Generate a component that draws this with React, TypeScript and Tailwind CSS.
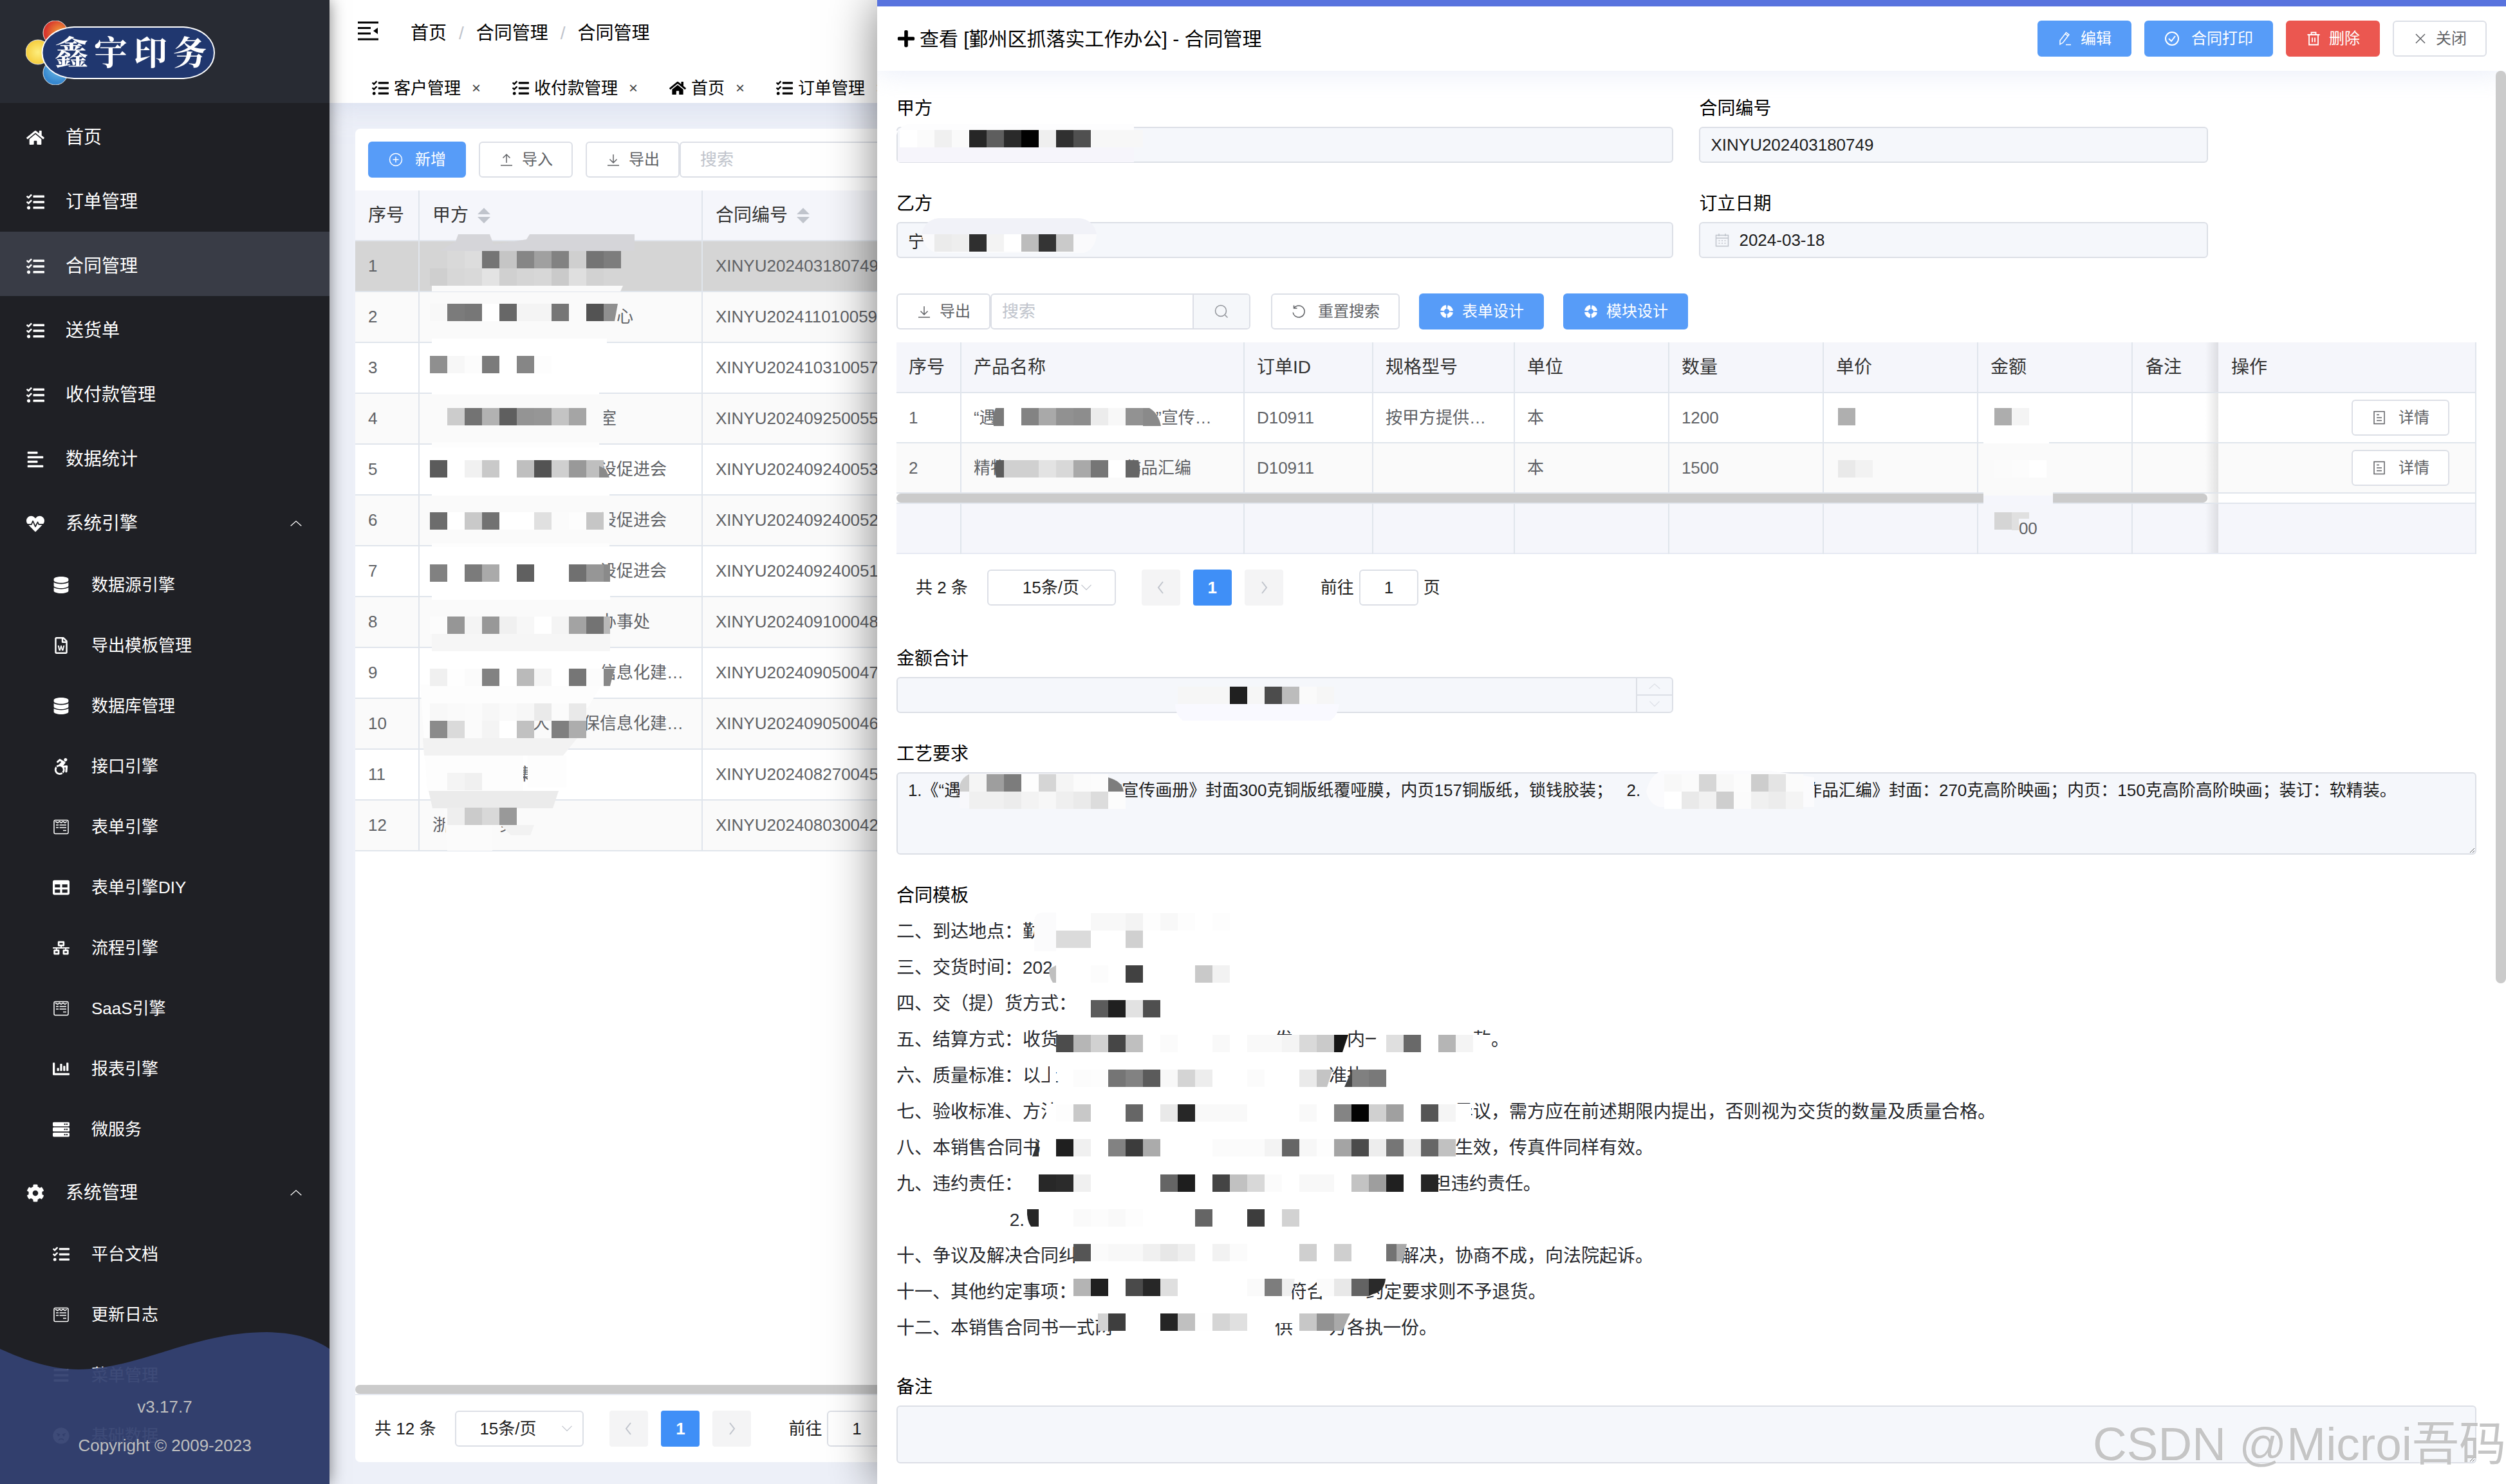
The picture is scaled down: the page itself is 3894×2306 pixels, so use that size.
import type { ReactNode } from "react";
import {
  FaAccessibleIcon,
  FaAlignLeft,
  FaAngry,
  FaBars,
  FaChartBar,
  FaCog,
  FaDatabase,
  FaHeartbeat,
  FaHome,
  FaNetworkWired,
  FaPlus,
  FaRegFileWord,
  FaServer,
  FaTable,
  FaTasks,
} from "react-icons/fa";

/* ---------- line icons ---------- */

interface LineIconProps {
  children: ReactNode;
  className?: string;
}

const LineIcon = ({ children, className = "h-6 w-6" }: LineIconProps) => (
  <svg
    viewBox="0 0 24 24"
    className={`shrink-0 ${className}`}
    fill="none"
    stroke="currentColor"
    strokeWidth="1.5"
    aria-hidden="true"
  >
    {children}
  </svg>
);

const CirclePlusIcon = () => (
  <LineIcon>
    <circle cx="12" cy="12" r="9.5" />
    <path d="M12 7.5v9M7.5 12h9" />
  </LineIcon>
);
const UploadIcon = () => (
  <LineIcon>
    <path d="M3 21h18M12 17V4M6.500 9.500 12 4l5.500 5.500" />
  </LineIcon>
);
const DownloadIcon = () => (
  <LineIcon>
    <path d="M3 21h18M12 4v13M6.500 11.500 12 17l5.500-5.500" />
  </LineIcon>
);
const EditIcon = () => (
  <LineIcon>
    <path d="M4 15 13.500 2.500l4.500 3.300L8.500 18.300 4 21z M12 4.600l4.500 3.300M13 21.500h8" />
  </LineIcon>
);
const CircleCheckIcon = () => (
  <LineIcon>
    <circle cx="12" cy="12" r="10" strokeWidth="2" />
    <path d="m7 12 4 4 6-8" strokeWidth="2" />
  </LineIcon>
);
const TrashIcon = () => (
  <LineIcon>
    <path d="M2.500 6h19M5 6v15.500h14V6M8.500 6V2.500h7V6M10 10.500v7M14 10.500v7" strokeWidth="1.800" />
  </LineIcon>
);
const CloseIcon = () => (
  <LineIcon>
    <path d="m5 5 14 14M19 5 5 19" />
  </LineIcon>
);
const SearchIcon = () => (
  <LineIcon>
    <circle cx="11" cy="11" r="8.5" />
    <path d="m17 17 4.500 4.500" />
  </LineIcon>
);
const ResetIcon = () => (
  <LineIcon>
    <path d="M5 6.500a9 9 0 1 1-1.800 7M4.500 2.500v4.500H9.500" />
  </LineIcon>
);
const HelpIcon = () => (
  <LineIcon>
    <circle cx="12" cy="12" r="7" strokeWidth="6" strokeDasharray="9 2" strokeDashoffset="-1" />
  </LineIcon>
);
const DetailIcon = () => (
  <LineIcon>
    <path d="M4 2.500h16v19H4zM8 7.500h4M8 12h8M8 16.500h8" />
  </LineIcon>
);
const CalendarIcon = () => (
  <LineIcon>
    <path d="M2.500 4.500h19v17h-19zM2.500 9h19M7 2v4M17 2v4" />
    <path d="M6.500 13h11M6.500 17h11" strokeDasharray="2 2.500" />
  </LineIcon>
);
const ChevronUp = () => (
  <LineIcon className="h-5 w-5">
    <path d="m2 16 10-9 10 9" />
  </LineIcon>
);
const ChevronDown = () => (
  <LineIcon className="h-5 w-5">
    <path d="m3 7 9 9 9-9" />
  </LineIcon>
);
const ChevronLeft = () => (
  <LineIcon>
    <path d="m15 3-7 9 7 9" strokeWidth="2" />
  </LineIcon>
);
const ChevronRight = () => (
  <LineIcon>
    <path d="m9 3 7 9-7 9" strokeWidth="2" />
  </LineIcon>
);
const FormIcon = () => (
  <svg viewBox="0 0 24 24" className="h-6" fill="none" stroke="currentColor" strokeWidth="1.500">
    <rect x="1" y="1.500" width="22" height="21" rx="2" />
    <path d="M3 3.500l3.500 2 3-2 2.500 2 3-2 3 2 3-2M4 9h4M9.500 9H20M4 13h4M9.500 13H20M15 17.500h5" />
  </svg>
);
const FoldIcon = () => (
  <svg viewBox="0 0 32 30" className="h-[30px] w-8" stroke="currentColor" strokeWidth="3" aria-hidden="true">
    <path d="M0 2h32M0 10.500h20M0 19h20M0 28h32" fill="none" />
    <path d="M31 10v10l-7-5z" fill="currentColor" stroke="none" />
  </svg>
);
const SortIcon = () => (
  <svg viewBox="0 0 20 24" className="h-6 w-5 text-[#c0c4cc]" fill="currentColor" aria-hidden="true">
    <path d="M10 0l10 10H0zM10 24 0 14h20z" />
  </svg>
);

/* ---------- redaction blocks ---------- */

const BLOCK = 27;

interface Strip {
  x: number;
  y: number;
  // one grey level per block in hex, "--" leaves the block open
  cells: string;
}

const Strips = ({ strips }: { strips: Strip[] }) => (
  <>
    {strips.map((strip) =>
      strip.cells.split(" ").map((grey, i) =>
        grey === "--" ? null : (
          <rect
            key={`${strip.x}-${strip.y}-${i}`}
            x={strip.x + i * BLOCK}
            y={strip.y}
            width={BLOCK}
            height={BLOCK}
            fill={`#${grey}${grey}${grey}`}
          />
        )
      )
    )}
  </>
);

const listStrips: Strip[] = [
  { x: 695, y: 390, cells: "d9 dd 75 c5 86 a0 82 cf 74 7d" },
  { x: 668, y: 417, cells: "cf d7 d9 e3 d0 d5 d7 ca df d2" },
  { x: 668, y: 472, cells: "f8 7b 77 ff 67 f4 f4 76 fa 53" },
  { x: 668, y: 553, cells: "8f f7 fc 7b ff 86 fd" },
  { x: 695, y: 634, cells: "cc 73 b2 5f 94 96 c4 a5 fa" },
  { x: 668, y: 715, cells: "5b ff f1 c9 ff bf 53 cf 99 bf" },
  { x: 668, y: 796, cells: "6c ff c9 72 ff ff e0 fb fd c6" },
  { x: 668, y: 877, cells: "81 ff 7b aa ff 60 ff ff 70 96" },
  { x: 668, y: 958, cells: "fc 96 f4 98 f0 f7 ff f4 a3 73" },
  { x: 668, y: 1039, cells: "f0 fe fb 82 ff ba f5 ff 76 fc" },
  { x: 668, y: 1093, cells: "f8 fa fb f7 fa f7 ea fb e9" },
  { x: 668, y: 1120, cells: "8b da fb f4 ff c1 -- 7f ad" },
  { x: 695, y: 1201, cells: "f4 f0" },
  { x: 695, y: 1255, cells: "ee cb d8 99" },
];

const ListRedaction = () => (
  <svg className="pointer-events-none absolute left-0 top-0 h-[1400px] w-[1300px]" aria-hidden="true">
    <path d="M684 390l24-15 4-11h49l6 16 51-8 5-8h163v26z" fill="#d5d5d9" />
    <path d="M671 444h297l-4 9H671z" fill="#fafafa" />
    <path d="M671 526h272v8H671zM671 607h260v6H671zM671 762h276v8H671zM671 924h277v8H671z" fill="#fff" />
    <path d="M671 687h260v8H671zM671 844h276v6H671z" fill="#fdfdfd" />
    <path d="M671 985h277v27H671z" fill="#f6f6f6" />
    <path d="M653 1064h282l-22 36h-52l-202 48z" fill="#fdfdfd" />
    <path d="M657 1147h240l-22 27H659z" fill="#f2f2f2" />
    <path d="M660 1174h153v56H664zM820 1174h60v50h-60z" fill="#fdfdfd" />
    <path d="M666 1229h202l-9 27H672z" fill="#ebebeb" />
    <path d="M690 1256h75v66h-70z" fill="#fbfbfb" />
    <path d="M778 1282h52l-6 16h-30z" fill="#f2f2f2" />
    <Strips strips={listStrips} />
    <path d="M938 472h22l-5 27h-17z" fill="#8f8f8f" />
    <path d="M931 724l10 5 6 13h-16z" fill="#8a8a8a" />
    <path d="M938 796h9v28h-9z" fill="#fafafa" />
    <path d="M938 877h10v27h-10z" fill="#8a8a8a" />
    <path d="M938 958h10v27h-10z" fill="#b8b8b8" />
    <path d="M938 1039h17l-7 27h-10z" fill="#888" />
  </svg>
);

// x is counted from the drawer's left edge
const drawerStrips: Strip[] = [
  { x: 35, y: 202, cells: "ff fb f0 fa 26 5e 2a 01 ef 30 50 f7 f7 f7" },
  { x: 89, y: 364, cells: "eb ee 2f f3 ff bc 34 ca" },
  { x: 197, y: 634, cells: "ff 83 a9 91 8d ec f8 92" },
  { x: 197, y: 715, cells: "d0 d0 e3 d8 a9 76 ff" },
  { x: 1493, y: 634, cells: "af" },
  { x: 1493, y: 715, cells: "e9 f2" },
  { x: 1736, y: 634, cells: "ad f4" },
  { x: 1736, y: 715, cells: "fb fc ff" },
  { x: 1736, y: 796, cells: "d5" },
  { x: 467, y: 1067, cells: "f6 f6 f6 20 f6 4c bc fa f6" },
  { x: 143, y: 1203, cells: "f5 9e 7c fd d5 f5 fb fc" },
  { x: 143, y: 1230, cells: "f0 f0 ec f3 f7 ef ea dc fc" },
  { x: 1223, y: 1203, cells: "f8 fb d6 f8 fc cd e4 fb" },
  { x: 1223, y: 1230, cells: "ff e9 f1 ce fb f0 ec f4" },
  { x: 278, y: 1419, cells: "ff ff f8 f8 f3 fd f8 fd -- fd" },
  { x: 278, y: 1446, cells: "db db -- -- d0" },
  { x: 332, y: 1500, cells: "fc -- 41 -- -- -- c9 f2" },
  { x: 332, y: 1554, cells: "5c 20 e2 4f" },
  { x: 278, y: 1608, cells: "4c b6 d1 46 bf -- fb -- -- f9 -- f9 f9 f4 d9 ca -- -- -- df 69 -- b5 f4 ff" },
  { x: 305, y: 1662, cells: "fc fd 75 82 5b f8 d4 ed -- -- fb -- -- ea -- -- 80 79" },
  { x: 278, y: 1716, cells: "fd c8 -- -- 66 -- e9 27 f9 f9 f9 -- -- -- f9 -- 84 03 d0 a0 -- 56 f5" },
  { x: 278, y: 1770, cells: "1f f0 -- 82 3c ab -- -- -- fb fb fb f3 66 f7 fd a4 4b ed 76 ed 66 c1" },
  { x: 251, y: 1825, cells: "28 2b f0 -- -- -- -- 65 1e -- 44 c1 d8 fb -- f8 f8 -- c3 9e 20 -- 25" },
  { x: 305, y: 1879, cells: "fa fc f9 fd -- -- -- 65 -- -- 3d -- d2" },
  { x: 305, y: 1933, cells: "55 fb f8 f8 f0 e7 ef -- f2 fb -- -- -- cf -- cf -- -- 73" },
  { x: 305, y: 1987, cells: "b4 1f -- 4a 27 df -- -- -- -- fa 7d -- -- fb e8 63" },
  { x: 359, y: 2041, cells: "3e -- -- 25 c0 fe d5 e0 -- -- -- c7 92" },
];

const DrawerRedaction = () => (
  <svg className="pointer-events-none absolute left-0 top-0 h-[2200px] w-[2400px]" aria-hidden="true">
    <path d="M29 214q4-20 20-21h350v10H29z" fill="#fdfdfe" />
    <path d="M32 228h367v24H32z" fill="#f6f5fb" />
    <path d="M69 364q4-22 26-25h218q24 2 28 25z" fill="#f1f2f8" />
    <path d="M69 364h272q-2 24-20 29H95q-22-4-26-29z" fill="#fafafc" />
    <path d="M1719 684h102v5h-102z" fill="#fff" />
    <path d="M1719 762h108v8h-108z" fill="#fafafa" />
    <path d="M1719 770h108v14h-108z" fill="#f5f6fc" />
    <path d="M463 1094h255q-2 18-14 26H475q-12-10-12-26z" fill="#f9f9ff" />
    <path d="M128 1256v-34q4-16 16-20h190q34 4 48 26v28z" fill="#f8f8fb" />
    <path d="M1195 1230q6-26 24-32h170q30 4 67 10v46h-240q-16-4-21-24z" fill="#fbfbfd" />
    <path d="M244 1430q2-12 14-12h20v60h-34z" fill="#fbfbfc" />
    <path d="M267 1506l11-6v27h-5q-6-9-6-21z" fill="#bfbfbf" />
    <path d="M268 1650h10v38h-10zM263 1715h15v28h-15zM780 1600l-16 44h26v-44zM228 1839h23v13h-23zM923 1715h-24v28h24z" fill="#fff" />
    <path d="M618 2040h34v16h-34zM679 2040h50l-6 24h-44zM668 1716h40v12h-40z" fill="#fff" />
    <Strips strips={drawerStrips} />
    <path d="M197 634v28h-16q-4-14 3-28z" fill="#7a7a7a" />
    <path d="M413 634h10q14 8 18 28h-28z" fill="#8a8a8a" />
    <path d="M197 715v27h-12q-4-14 0-27z" fill="#5c5c5c" />
    <path d="M386 715h20q4 14 1 27h-21z" fill="#666" />
    <path d="M1763 796h27v10h-16v18h-11z" fill="#e0e0e0" />
    <path d="M128 1230v-10q4-12 15-17v27z" fill="#cfcfcf" />
    <path d="M359 1208q22 6 24 22h-24z" fill="#7d7d7d" />
    <path d="M710 1608h22l-9 27h-13z" fill="#161616" />
    <path d="M683 1662h25l-9 27h-16z" fill="#c4c4c4" />
    <path d="M738 1662v27h-12z" fill="#454545" />
    <path d="M251 1770v27h-10z" fill="#333" />
    <path d="M251 1879v27h-12q-7-10-6-27z" fill="#262626" />
    <path d="M629 1987h20l-6 27h-14z" fill="#efefef" />
    <path d="M764 1987h26q-2 20-20 24l-6 3z" fill="#2a2a2a" />
    <path d="M343 2041h16v27h-16z" fill="#d3d3d3" />
    <path d="M710 2041h25l-12 27h-13z" fill="#a9a9a9" />
    <path d="M823 1933l-6 27h-10v-27z" fill="#a9a9a9" />
  </svg>
);

/* ---------- buttons and form parts ---------- */

interface ActionButtonProps {
  icon: ReactNode;
  label: string;
  tone?: "plain" | "primary" | "danger";
  wide?: boolean;
}

const tones = {
  plain: "border-[#dcdfe6] bg-white text-[#606266]",
  primary: "border-[#579cf8] bg-[#579cf8] text-white",
  danger: "border-[#eb5750] bg-[#eb5750] text-white",
};

const ActionButton = ({ icon, label, tone = "plain", wide }: ActionButtonProps) => (
  <button
    className={`flex h-14 shrink-0 items-center rounded-md border-2 px-[29px] text-[24px] ${
      wide ? "gap-[18px]" : "gap-3"
    } ${tones[tone]}`}
  >
    {icon}
    {label}
  </button>
);

interface PaginationProps {
  id: string;
  total: number;
  compact?: boolean;
}

const Pagination = ({ id, total, compact }: PaginationProps) => (
  <div className="flex items-center text-[26px] text-[#1c1c1c]">
    <span>共 {total} 条</span>
    <div className="relative ml-[30px]">
      <select
        aria-label="每页条数"
        className={`h-14 w-[200px] appearance-none rounded-md border-2 border-[#dcdfe6] bg-white ${
          compact ? "pl-[53px]" : "pl-9"
        }`}
      >
        <option>15条/页</option>
      </select>
      <span
        className={`pointer-events-none absolute inset-y-0 flex items-center text-[#c0c4cc] ${
          compact ? "right-9" : "right-4"
        }`}
      >
        <ChevronDown />
      </span>
    </div>
    <div className="ml-10 flex gap-5">
      <button aria-label="上一页" className="flex h-14 w-[60px] items-center justify-center rounded bg-[#f4f4f5] text-[#c0c4cc]">
        <ChevronLeft />
      </button>
      <button className="h-14 w-[60px] rounded bg-[#3f8ff7] font-bold text-white">1</button>
      <button aria-label="下一页" className="flex h-14 w-[60px] items-center justify-center rounded bg-[#f4f4f5] text-[#c0c4cc]">
        <ChevronRight />
      </button>
    </div>
    <label htmlFor={id} className="ml-[58px]">
      前往
    </label>
    <input
      id={id}
      defaultValue="1"
      className="mx-2 h-14 w-[92px] rounded-md border-2 border-[#dcdfe6] bg-white text-center"
    />
    <span>页</span>
  </div>
);

interface FieldProps {
  id: string;
  label: string;
  children: ReactNode;
}

const Field = ({ id, label, children }: FieldProps) => (
  <div>
    <label htmlFor={id} className="block text-[28px] leading-[56px] text-black">
      {label}
    </label>
    {children}
  </div>
);

const boxClass = "rounded-md border-2 border-[#dcdfe6] bg-[#f5f7fb] text-[26px] text-[#1c1c1c]";

/* ---------- sidebar ---------- */

interface MenuEntry {
  label: string;
  icon: ReactNode;
  active?: boolean;
  children?: MenuEntry[];
}

const menu: MenuEntry[] = [
  { label: "首页", icon: <FaHome /> },
  { label: "订单管理", icon: <FaTasks /> },
  { label: "合同管理", icon: <FaTasks />, active: true },
  { label: "送货单", icon: <FaTasks /> },
  { label: "收付款管理", icon: <FaTasks /> },
  { label: "数据统计", icon: <FaAlignLeft /> },
  {
    label: "系统引擎",
    icon: <FaHeartbeat />,
    children: [
      { label: "数据源引擎", icon: <FaDatabase /> },
      { label: "导出模板管理", icon: <FaRegFileWord /> },
      { label: "数据库管理", icon: <FaDatabase /> },
      { label: "接口引擎", icon: <FaAccessibleIcon /> },
      { label: "表单引擎", icon: <FormIcon /> },
      { label: "表单引擎DIY", icon: <FaTable /> },
      { label: "流程引擎", icon: <FaNetworkWired /> },
      { label: "SaaS引擎", icon: <FormIcon /> },
      { label: "报表引擎", icon: <FaChartBar /> },
      { label: "微服务", icon: <FaServer /> },
    ],
  },
  {
    label: "系统管理",
    icon: <FaCog />,
    children: [
      { label: "平台文档", icon: <FaTasks /> },
      { label: "更新日志", icon: <FormIcon /> },
      { label: "菜单管理", icon: <FaBars /> },
      { label: "基础数据", icon: <FaAngry /> },
    ],
  },
];

const Logo = () => (
  <svg viewBox="0 0 294 100" className="h-[100px] w-[294px]" role="img" aria-label="鑫宇印务">
    <defs>
      <radialGradient id="logoRed" cx="0.7" cy="0.5" r="0.6">
        <stop offset="0" stopColor="#f3a63a" />
        <stop offset="1" stopColor="#d8372d" />
      </radialGradient>
      <radialGradient id="logoYellow">
        <stop offset="0" stopColor="#fdee7e" />
        <stop offset="1" stopColor="#f5cd3d" />
      </radialGradient>
      <radialGradient id="logoBlue" cx="0.6" cy="0.3" r="0.6">
        <stop offset="0" stopColor="#74c0e8" />
        <stop offset="1" stopColor="#3788cf" />
      </radialGradient>
    </defs>
    <circle cx="46" cy="19" r="19" fill="url(#logoRed)" stroke="#e8e8e8" strokeWidth="1" />
    <circle cx="46" cy="81" r="19" fill="url(#logoBlue)" stroke="#e8e8e8" strokeWidth="1" />
    <circle cx="19" cy="49" r="19" fill="url(#logoYellow)" stroke="#e8e8e8" strokeWidth="1" />
    <path
      d="M75 10h170c64 4 64 76 0 80H75C9 86 9 14 75 10z"
      fill="#20376f"
      stroke="#fff"
      strokeWidth="2"
    />
    <text
      x="45 106 168 229"
      y="69"
      fill="#fff"
      className="font-[family-name:'Noto_Serif_CJK_SC','Noto_Sans_CJK_SC',serif] text-[52px] font-bold"
    >
      鑫宇印务
    </text>
  </svg>
);

const Sidebar = () => (
  <aside className="relative z-10 flex w-[512px] shrink-0 flex-col overflow-hidden bg-[#1f2025] text-white shadow-[0_0_24px_rgba(0,0,0,0.5)]">
    <div className="flex h-40 shrink-0 items-start bg-[#282b33] px-10 pt-8">
      <Logo />
    </div>
    <nav>
      {menu.map((entry) => (
        <div key={entry.label}>
          <a
            href="#"
            className={`flex h-[100px] items-center pl-10 pr-[42px] pt-2 text-[28px] ${
              entry.active ? "bg-[#393c46]" : ""
            }`}
          >
            <span className="mr-8 flex w-[30px] justify-center [&>svg]:w-auto">{entry.icon}</span>
            <span className="flex-1">{entry.label}</span>
            {entry.children && <ChevronUp />}
          </a>
          {entry.children?.map((child) => (
            <a key={child.label} href="#" className="flex h-[94px] items-center pl-20 pt-1 text-[26px]">
              <span className="mr-8 flex w-[30px] justify-center [&>svg]:w-auto">{child.icon}</span>
              {child.label}
            </a>
          ))}
        </div>
      ))}
    </nav>
    <div className="absolute inset-x-0 bottom-0 text-center text-[26px] text-[#bfbfbf]">
      <svg viewBox="0 0 512 236" preserveAspectRatio="none" className="block h-[236px] w-full" aria-hidden="true">
        <path
          d="M0 26C40 44 80 58 122 58 220 56 300 0 415 0c40 1 70 8 97 26v210H0z"
          fill="#344171"
          fillOpacity="0.95"
        />
      </svg>
      <div className="absolute inset-x-0 bottom-[30px] leading-[60px]">
        <p>v3.17.7</p>
        <p>Copyright © 2009-2023</p>
      </div>
    </div>
  </aside>
);

/* ---------- contract list ---------- */

const tabs = [
  { label: "客户管理", icon: <FaTasks /> },
  { label: "收付款管理", icon: <FaTasks /> },
  { label: "首页", icon: <FaHome /> },
  { label: "订单管理", icon: <FaTasks /> },
];

const contracts = [
  { party: "", code: "XINYU202403180749" },
  { party: "　　　　　　　　　　　心", code: "XINYU202411010059" },
  { party: "", code: "XINYU202410310057" },
  { party: "　　　　　　　　　　室", code: "XINYU202409250055" },
  { party: "　　　　　　　　　　设促进会", code: "XINYU202409240053" },
  { party: "　　　　　　　　　　设促进会", code: "XINYU202409240052" },
  { party: "　　　　　　　　　　设促进会", code: "XINYU202409240051" },
  { party: "　　　　　　　　　　办事处", code: "XINYU202409100048" },
  { party: "　　　　　　　　　　信息化建…", code: "XINYU202409050047" },
  { party: "　　　　　　人　　保信息化建…", code: "XINYU202409050046" },
  { party: "　　　　　集", code: "XINYU202408270045" },
  { party: "浙　　　务", code: "XINYU202408030042" },
];

const ContractList = () => (
  <main className="flex min-w-0 flex-1 flex-col bg-[#edf0f8]">
    <header className="flex h-40 shrink-0 flex-col bg-white pl-11 text-black shadow-[0_4px_40px_rgba(200,208,232,0.6)]">
      <div className="flex h-[104px] shrink-0 items-center text-[28px]">
        <button aria-label="折叠菜单" className="pb-2">
          <FoldIcon />
        </button>
        <nav className="ml-[50px] flex gap-[19px]">
          <a href="#">首页</a>
          <span className="text-[#c0c4cc]">/</span>
          <a href="#">合同管理</a>
          <span className="text-[#c0c4cc]">/</span>
          <a href="#">合同管理</a>
        </nav>
      </div>
      <div className="flex flex-1 items-center gap-[46px] pl-[22px] pt-2.5 text-[26px]">
        {tabs.map((tab) => (
          <div key={tab.label} className="flex shrink-0 items-center">
            <span className="mr-2 [&>svg]:w-auto">{tab.icon}</span>
            {tab.label}
            <button aria-label="关闭标签" className="ml-3.5 w-5 text-[24px] text-[#444]">
              ×
            </button>
          </div>
        ))}
      </div>
    </header>

    <section className="mx-10 mb-[34px] mt-10 flex flex-1 flex-col overflow-hidden rounded-lg bg-white">
      <div className="flex p-5">
        <div className="flex gap-5">
          <ActionButton icon={<CirclePlusIcon />} label="新增" tone="primary" wide />
          <ActionButton icon={<UploadIcon />} label="导入" />
          <ActionButton icon={<DownloadIcon />} label="导出" />
        </div>
        <input
          aria-label="搜索"
          placeholder="搜索"
          className="h-14 w-[400px] rounded-md border-2 border-[#dcdfe6] px-[30px] text-[26px] placeholder:text-[#c0c4cc]"
        />
      </div>
      <div className="flex-1">
        <table className="w-full table-fixed border-collapse text-left">
          <colgroup>
            <col className="w-[99px]" />
            <col className="w-[440px]" />
            <col />
          </colgroup>
          <thead className="bg-[#f5f6fb] text-[28px] text-[#333]">
            <tr className="h-[78px] border-b-2 border-[#e0e5ec]">
              <th className="border-r-2 border-[#e0e5ec] pl-5 font-normal">序号</th>
              <th className="border-r-2 border-[#e0e5ec] pl-5 font-normal">
                <span className="flex items-center gap-3.5">
                  甲方 <SortIcon />
                </span>
              </th>
              <th className="pl-5 font-normal">
                <span className="flex items-center gap-3.5">
                  合同编号 <SortIcon />
                </span>
              </th>
            </tr>
          </thead>
          <tbody className="text-[26px] text-[#606266]">
            {contracts.map((row, i) => (
              <tr
                key={row.code}
                className={`h-[79px] border-b-2 border-[#e0e5ec] ${
                  i === 0 ? "bg-[#d5d5d5]" : i % 2 ? "bg-[#fafafa]" : "bg-white"
                }`}
              >
                <td className="border-r-2 border-[#e0e5ec] pl-5">{i + 1}</td>
                <td className="whitespace-pre border-r-2 border-[#e0e5ec] pl-5">{row.party}</td>
                <td className="pl-5">{row.code}</td>
              </tr>
            ))}
          </tbody>
        </table>
      </div>
      <div className="border-b-2 border-[#e8ebf2]">
        <div className="h-3.5 w-4/5 rounded-lg bg-[#cbcbcb]" />
      </div>
      <div className="px-[30px] py-6">
        <Pagination id="list-page" total={12} />
      </div>
    </section>
  </main>
);

/* ---------- contract drawer ---------- */

const productHeads = ["序号", "产品名称", "订单ID", "规格型号", "单位", "数量", "单价", "金额", "备注", "操作"];

const products = [
  {
    name: "“遇　　　　　　　　　\u00a0\u00a0”宣传…",
    order: "D10911",
    spec: "按甲方提供…",
    unit: "本",
    count: 1200,
  },
  { name: "精物　　　　　　　作品汇编", order: "D10911", spec: "", unit: "本", count: 1500 },
];

const craft =
  "1.《“遇　　　　　　　　　\u00a0”宣传画册》封面300克铜版纸覆哑膜，内页157铜版纸，锁钱胶装； \u00a0\u00a02.《　　　　　　　　\u00a0\u00a0\u00a0作品汇编》封面：270克高阶映画；内页：150克高阶高阶映画；装订：软精装。";

const clauses = [
  "二、到达地点：勤",
  "三、交货时间：202",
  "四、交（提）货方式：",
  "五、结算方式：收货　　　　　　　　　　　　发　　　内一　　　　　款。",
  "六、质量标准：以上　　　　　　　　　　　　　　　准执",
  "七、验收标准、方法　　　　　　　　　　　　　　　　　　　　　　异议，需方应在前述期限内提出，否则视为交货的数量及质量合格。",
  "八、本销售合同书　　　　　　　　　　　　　　　　　　　　　　　生效，传真件同样有效。",
  "九、违约责任：　　　　　　　　　　　　　　　　　　　　　　　\u00a0担违约责任。",
  "　　　　　　\u00a02.",
  "十、争议及解决合同纠　　　　　　　　　　　　　　　　　　解决，协商不成，向法院起诉。",
  "十一、其他约定事项：　　　　　　　　　　　　\u00a0符合　　\u00a0约定要求则不予退货。",
  "十二、本销售合同书一式两　　　　　　　　　供　　方各执一份。",
];

const cell = "border-r-2 border-[#e0e5ec] pl-[19px]";
// pinned column, the soft edge on its left is a gradient
const fixedCell =
  "relative border-r-2 border-[#e0e5ec] before:pointer-events-none before:absolute before:inset-y-0 before:right-full before:w-5 before:bg-gradient-to-l before:from-black/10 before:to-transparent";

const ProductTable = () => (
  <table className="mt-5 w-full table-fixed border-collapse text-left">
    <colgroup>
      <col className="w-[100px]" />
      <col className="w-[440px]" />
      <col className="w-[200px]" />
      <col className="w-[220px]" />
      <col className="w-[240px]" />
      <col className="w-[240px]" />
      <col className="w-[240px]" />
      <col className="w-[240px]" />
      <col />
      <col className="w-[400px]" />
    </colgroup>
    <thead className="bg-[#f5f6fb] text-[28px] text-[#333]">
      <tr className="h-[78px] border-b-2 border-[#e0e5ec]">
        {productHeads.map((head, i) => (
          <th key={head} className={`font-normal ${i === 8 ? "pl-5" : i === 9 ? `${fixedCell} pl-5` : cell}`}>
            {head}
          </th>
        ))}
      </tr>
    </thead>
    <tbody className="text-[26px] text-[#606266]">
      {products.map((row, i) => (
        <tr key={row.name} className={`h-[78px] border-b-2 border-[#e0e5ec] ${i % 2 ? "bg-[#fafafa]" : "bg-white"}`}>
          <td className={cell}>{i + 1}</td>
          <td className={`${cell} whitespace-pre`}>{row.name}</td>
          <td className={cell}>{row.order}</td>
          <td className={cell}>{row.spec}</td>
          <td className={cell}>{row.unit}</td>
          <td className={cell}>{row.count}</td>
          <td className={cell} />
          <td className={cell} />
          <td />
          <td className={fixedCell}>
            <div className="flex justify-end pr-10">
              <ActionButton icon={<DetailIcon />} label="详情" wide />
            </div>
          </td>
        </tr>
      ))}
      <tr className="border-b-2 border-[#e0e5ec]">
        <td colSpan={9} className="p-0">
          <div className="h-3.5 w-[2037px] max-w-full rounded-lg bg-[#cbcbcb]" />
        </td>
        <td className={fixedCell} />
      </tr>
    </tbody>
    <tfoot className="bg-[#f5f6fb] text-[26px] text-[#606266]">
      <tr className="h-[78px] border-b-2 border-[#e6eaf3]">
        {productHeads.map((head, i) => (
          <td key={head} className={i === 8 ? "" : i === 9 ? fixedCell : cell}>
            {i === 7 && <span className="pl-11">00</span>}
          </td>
        ))}
      </tr>
    </tfoot>
  </table>
);

const ContractDrawer = () => (
  <section
    role="dialog"
    aria-label="合同管理"
    className="absolute inset-y-0 right-0 z-20 w-[65%] overflow-hidden border-t-[10px] border-[#5873de] bg-white shadow-[0_0_70px_rgba(0,0,0,0.5)]"
  >
    <header className="flex h-[100px] items-center justify-between px-[30px] shadow-[0_4px_40px_rgba(220,226,245,0.6)]">
      <h1 className="flex items-center gap-1.5 text-[30px] text-black">
        <FaPlus />
        查看 [鄞州区抓落实工作办公] - 合同管理
      </h1>
      <div className="flex gap-5">
        <ActionButton icon={<EditIcon />} label="编辑" tone="primary" />
        <ActionButton icon={<CircleCheckIcon />} label="合同打印" tone="primary" wide />
        <ActionButton icon={<TrashIcon />} label="删除" tone="danger" />
        <ActionButton icon={<CloseIcon />} label="关闭" />
      </div>
    </header>

    <div className="pl-[30px] pr-[46px] pt-[31px]">
      <div className="grid grid-cols-2 gap-x-10 gap-y-9">
        <Field id="party-a" label="甲方">
          <input id="party-a" readOnly className={`${boxClass} h-14 w-full px-4`} />
        </Field>
        <Field id="contract-code" label="合同编号">
          <input
            id="contract-code"
            readOnly
            defaultValue="XINYU202403180749"
            className={`${boxClass} h-14 w-[791px] px-4`}
          />
        </Field>
        <Field id="party-b" label="乙方">
          <input id="party-b" readOnly defaultValue="宁" className={`${boxClass} h-14 w-full px-4`} />
        </Field>
        <Field id="sign-date" label="订立日期">
          <div className={`${boxClass} flex h-14 w-[791px] items-center gap-3.5 px-[22px]`}>
            <span className="text-[#c0c4cc]">
              <CalendarIcon />
            </span>
            <input id="sign-date" readOnly defaultValue="2024-03-18" className="min-w-0 flex-1 bg-transparent" />
          </div>
        </Field>
      </div>

      <div className="mt-[55px] flex">
        <ActionButton icon={<DownloadIcon />} label="导出" />
        <div className="flex h-14 w-[404px] overflow-hidden rounded-md border-2 border-[#dcdfe6]">
          <input
            aria-label="搜索产品"
            placeholder="搜索"
            className="min-w-0 flex-1 px-4 text-[26px] placeholder:text-[#c0c4cc]"
          />
          <button
            aria-label="搜索"
            className="flex w-[88px] items-center justify-center border-l-2 border-[#dcdfe6] bg-[#f5f7fa] text-[#909399]"
          >
            <SearchIcon />
          </button>
        </div>
        <div className="ml-8 flex gap-[30px]">
          <ActionButton icon={<ResetIcon />} label="重置搜索" wide />
          <ActionButton icon={<HelpIcon />} label="表单设计" tone="primary" />
          <ActionButton icon={<HelpIcon />} label="模块设计" tone="primary" />
        </div>
      </div>

      <ProductTable />
      <div className="mt-6 pl-[30px]">
        <Pagination id="product-page" total={2} compact />
      </div>

      <div className="mt-[55px] flex flex-col gap-9">
        <Field id="amount" label="金额合计">
          <div className={`${boxClass} flex h-14 w-[1207px] overflow-hidden`}>
            <input id="amount" readOnly className="min-w-0 flex-1 bg-transparent text-center" />
            <div className="flex w-14 flex-col border-l-2 border-[#dcdfe6] text-[#dcdfe6]">
              <button aria-label="增加" className="flex flex-1 items-center justify-center border-b-2 border-[#dcdfe6]">
                <ChevronUp />
              </button>
              <button aria-label="减少" className="flex flex-1 items-center justify-center">
                <ChevronDown />
              </button>
            </div>
          </div>
        </Field>
        <Field id="craft" label="工艺要求">
          <textarea
            id="craft"
            readOnly
            defaultValue={craft}
            className={`${boxClass} block h-32 w-full px-4 py-1.5 leading-[40px]`}
          />
        </Field>
        <div>
          <h2 className="text-[28px] leading-[56px] text-black">合同模板</h2>
          <div className="text-[28px] leading-[56px] text-[#26282d]">
            {clauses.map((clause) => (
              <p key={clause} className="whitespace-pre">
                {clause}
              </p>
            ))}
          </div>
        </div>
        <Field id="remark" label="备注">
          <textarea id="remark" readOnly className={`${boxClass} block h-[90px] w-full px-4 py-2`} />
        </Field>
      </div>
    </div>

    <div className="absolute right-0 top-[100px] h-[1418px] w-4 rounded-full bg-[#cbcbcb]" />
    <div className="absolute -top-2.5 left-0">
      <DrawerRedaction />
    </div>
    <p className="absolute bottom-2 right-0 whitespace-nowrap text-[73px] text-[#8c8c8c]/50 [text-shadow:0_0_3px_#fff]">
      CSDN @Microi吾码
    </p>
  </section>
);

const App = () => (
  <div className="relative flex h-screen overflow-hidden font-[family-name:'Liberation_Sans','Noto_Sans_CJK_SC',sans-serif]">
    <Sidebar />
    <ContractList />
    <ListRedaction />
    <ContractDrawer />
  </div>
);

export default App;
